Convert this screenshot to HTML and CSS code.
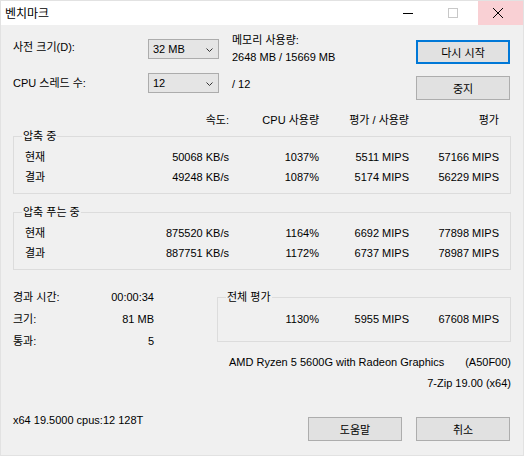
FILE: index.html
```html
<!DOCTYPE html>
<html lang="ko">
<head>
<meta charset="utf-8">
<title>벤치마크</title>
<link rel="stylesheet" href="styles.css">
</head>
<body>
<div class="window">
  <div class="titlebar">
    <div class="title">벤치마크</div>
    <div class="cap cap-min"><svg width="10" height="10" viewBox="0 0 10 10"><path d="M0 5.5H10" stroke="#000" stroke-width="1"/></svg></div>
    <div class="cap cap-max"><svg width="10" height="10" viewBox="0 0 10 10"><rect x="0.5" y="0.5" width="9" height="9" fill="none" stroke="#c8c8c8"/></svg></div>
    <div class="cap cap-close"><svg width="10" height="10" viewBox="0 0 10 10"><path d="M0 0L10 10M10 0L0 10" stroke="#000" stroke-width="1"/></svg></div>
  </div>

  <div class="content">
    <div class="top">
      <div class="col col-labels">
        <div class="line l1">사전 크기(D):</div>
        <div class="line l2">CPU 스레드 수:</div>
      </div>
      <div class="col col-combos">
        <div class="combo c1"><span>32 MB</span><svg width="7" height="4" viewBox="0 0 7 4"><path d="M0.5 0.5L3.5 3.5L6.5 0.5" fill="none" stroke="#333" stroke-width="1"/></svg></div>
        <div class="combo c2"><span>12</span><svg width="7" height="4" viewBox="0 0 7 4"><path d="M0.5 0.5L3.5 3.5L6.5 0.5" fill="none" stroke="#333" stroke-width="1"/></svg></div>
      </div>
      <div class="col col-mem">
        <div class="mem">메모리 사용량:<br>2648 MB / 15669 MB</div>
        <div class="line threads">/ 12</div>
      </div>
      <div class="col col-btns">
        <button class="btn btn-default">다시 시작</button>
        <button class="btn b2">중지</button>
      </div>
    </div>

    <div class="grid-row header">
      <span></span>
      <span>속도:</span>
      <span>CPU 사용량</span>
      <span>평가 / 사용량</span>
      <span>평가</span>
    </div>

    <div class="group g1">
      <span class="legend">압축 중</span>
      <div class="grid-row">
        <span class="name">현재</span><span>50068 KB/s</span><span>1037%</span><span>5511 MIPS</span><span>57166 MIPS</span>
      </div>
      <div class="grid-row r2">
        <span class="name">결과</span><span>49248 KB/s</span><span>1087%</span><span>5174 MIPS</span><span>56229 MIPS</span>
      </div>
    </div>

    <div class="group g2">
      <span class="legend">압축 푸는 중</span>
      <div class="grid-row">
        <span class="name">현재</span><span>875520 KB/s</span><span>1164%</span><span>6692 MIPS</span><span>77898 MIPS</span>
      </div>
      <div class="grid-row r2">
        <span class="name">결과</span><span>887751 KB/s</span><span>1172%</span><span>6737 MIPS</span><span>78987 MIPS</span>
      </div>
    </div>

    <div class="bottom">
      <div class="stats">
        <span>경과 시간:</span><span class="val">00:00:34</span>
        <span>크기:</span><span class="val">81 MB</span>
        <span>통과:</span><span class="val">5</span>
      </div>
      <div class="group g3">
        <span class="legend">전체 평가</span>
        <div class="total-row">
          <span>1130%</span><span>5955 MIPS</span><span>67608 MIPS</span>
        </div>
      </div>
    </div>

    <div class="cpu-row">
      <span>AMD Ryzen 5 5600G with Radeon Graphics</span>
      <span>(A50F00)</span>
    </div>
    <div class="version">7-Zip 19.00 (x64)</div>

    <div class="footer">
      <div class="sysinfo">x64 19.5000 cpus:12 128T</div>
      <button class="btn">도움말</button>
      <button class="btn">취소</button>
    </div>
  </div>
</div>
</body>
</html>
```

FILE: styles.css
```css
* {
  box-sizing: border-box;
}

html, body {
  margin: 0;
  padding: 0;
  background: #f0f0f0;
}

body {
  font-family: "Liberation Sans", "Noto Sans CJK KR", sans-serif;
  font-size: 11px;
  line-height: 14px;
  color: #000;
}

.window {
  width: 524px;
  height: 456px;
  border: 1px solid #e2e2e2;
  background: #f0f0f0;
  overflow: hidden;
}

/* ---------- title bar ---------- */
.titlebar {
  display: flex;
  height: 24px;
  background: #fff;
}

.title {
  flex: 1;
  padding-left: 4px;
  font-size: 12px;
  line-height: 24px;
  font-family: "Noto Sans CJK KR", sans-serif;
}

.cap {
  display: flex;
  align-items: center;
  justify-content: center;
  height: 24px;
}

.cap svg {
  display: block;
}

.cap-min {
  width: 46px;
  padding-right: 2px;
}

.cap-max {
  width: 46px;
  padding-right: 5px;
}

.cap-close {
  width: 45px;
  padding-right: 5px;
  background: #f9d0d4;
}

/* ---------- content ---------- */
.content {
  padding: 0 12px;
}

.top {
  display: flex;
  margin-top: 7px;
}

.col {
  display: flex;
  flex-direction: column;
}

.col-labels {
  width: 135px;
}

.col-labels .l1 {
  margin-top: 8px;
}

.col-labels .l2 {
  margin-top: 22px;
}

.col-combos {
  width: 71px;
}

.combo {
  display: flex;
  align-items: center;
  justify-content: space-between;
  height: 20px;
  padding: 0 5px 0 4px;
  border: 1px solid #acacac;
  background: #e5e5e5;
}

.combo svg {
  display: block;
  margin-top: 2px;
}

.c1 {
  margin-top: 7px;
}

.c2 {
  margin-top: 14px;
}

.col-mem {
  width: 184px;
  margin-left: 13px;
}

.mem {
  line-height: 17px;
}

.threads {
  margin-top: 11px;
}

.col-btns {
  width: 94px;
}

.btn {
  display: flex;
  align-items: center;
  justify-content: center;
  width: 94px;
  height: 24px;
  padding: 0;
  margin: 0;
  border: 1px solid #adadad;
  background: #e1e1e1;
  font-family: "Liberation Sans", "Noto Sans CJK KR", sans-serif;
  font-size: 11px;
  color: #000;
}

.btn-default {
  margin-top: 8px;
  border: 2px solid #0078d7;
}

.b2 {
  margin-top: 12px;
}

/* ---------- table rows ---------- */
.grid-row {
  display: grid;
  grid-template-columns: 1fr 90px 90px 90px 90px;
  text-align: right;
  white-space: nowrap;
}

.grid-row .name {
  text-align: left;
}

.header {
  margin-top: 13px;
  padding: 0 12px;
}

.group {
  position: relative;
  border: 1px solid #dcdcdc;
  padding: 13px 11px 9px;
}

.group .r2 {
  margin-top: 6px;
}

.legend {
  position: absolute;
  top: -8px;
  left: 8px;
  padding: 0 1px;
  background: #f0f0f0;
  line-height: 14px;
  white-space: nowrap;
}

.g1 {
  margin-top: 9px;
}

.g2 {
  margin-top: 18px;
}

/* ---------- bottom ---------- */
.bottom {
  display: flex;
  align-items: flex-start;
  margin-top: 16px;
}

.stats {
  display: grid;
  grid-template-columns: 1fr auto;
  grid-template-rows: 22px 22px 21px;
  align-items: center;
  width: 141px;
}

.stats .val {
  text-align: right;
}

.g3 {
  flex: 1;
  margin-left: 63px;
  margin-top: 11px;
  padding: 14px 11px 15px;
}

.total-row {
  display: grid;
  grid-template-columns: 90px 90px 90px;
  text-align: right;
  white-space: nowrap;
}

.cpu-row {
  display: flex;
  justify-content: space-between;
  margin-top: 4px;
  padding-left: 216px;
  white-space: nowrap;
}

.version {
  margin-top: 7px;
  text-align: right;
}

.footer {
  display: flex;
  align-items: flex-start;
  gap: 14px;
  margin-top: 23px;
  padding-right: 1px;
}

.sysinfo {
  flex: 1;
}

.footer .btn {
  margin-top: 4px;
}
```
